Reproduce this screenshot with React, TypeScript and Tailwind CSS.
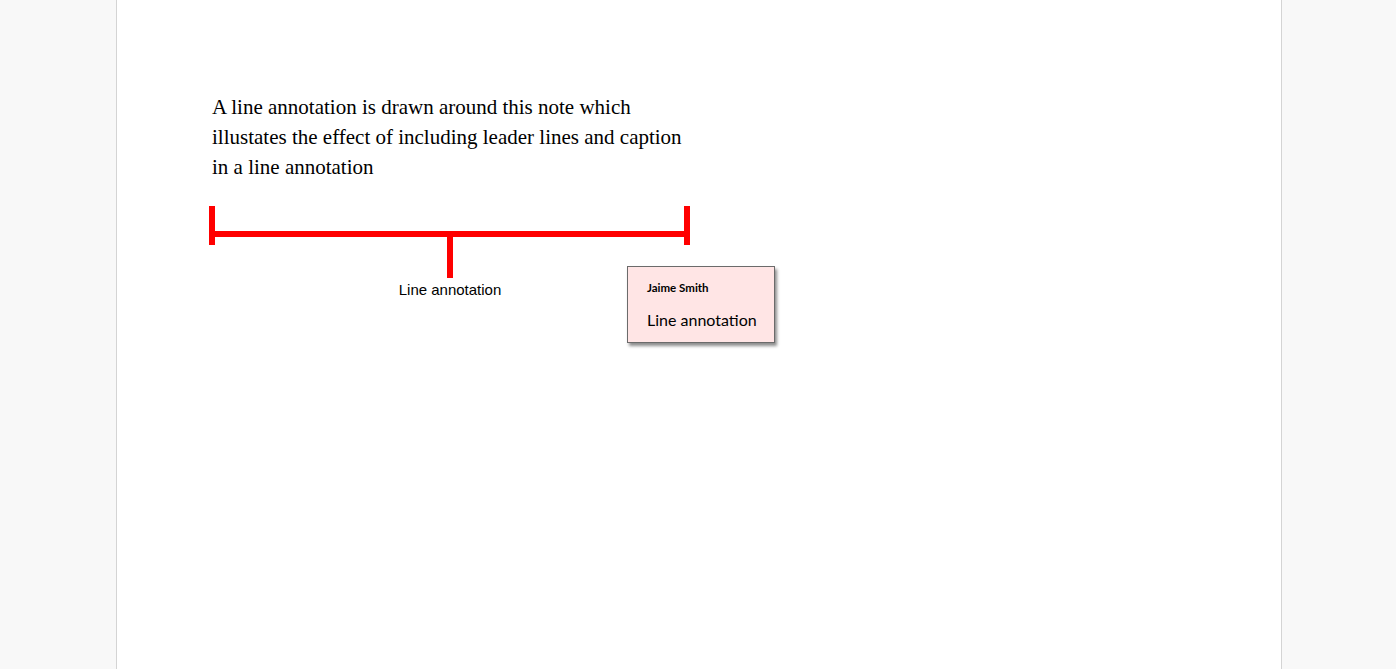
import React from "react"

const LineAnnotation: React.FC<{ caption: string }> = ({ caption }) => {
    return (
        <div className="flex flex-col items-center w-[482px] -ml-[3px] mt-[24px]">
            <svg width="482" height="72" viewBox="0 0 482 72">
                <rect x="0" y="0" width="6" height="39" fill="#ff0000" />
                <rect x="475" y="0" width="6" height="39" fill="#ff0000" />
                <rect x="0" y="25" width="481" height="6" fill="#ff0000" />
                <rect x="238" y="28" width="6" height="44" fill="#ff0000" />
            </svg>
            <div className="mt-[3px] font-['Liberation_Sans',sans-serif] text-[15px] leading-[18px] text-black">
                {caption}
            </div>
        </div>
    )
}

const NotePopup: React.FC<{ author: string, text: string }> = ({ author, text }) => {
    return (
        <div className="absolute left-[510px] top-[266px] w-[148px] h-[77px] bg-[#ffe5e5] border border-[#6b6b6b] shadow-[2px_3px_3px_rgba(0,0,0,0.45)] pl-[19px] pt-[14px] flex flex-col gap-[15px] font-['Lato',sans-serif] text-black">
            <div className="text-[11.5px] font-bold leading-[14px]">{author}</div>
            <div className="text-[16px] leading-[20px]">{text}</div>
        </div>
    )
}

export default function App() {
    const lines = [
        "A line annotation is drawn around this note which",
        "illustates the effect of including leader lines and caption",
        "in a line annotation",
    ]
    return (
        <div className="w-full h-[669px] bg-[#f8f8f8] overflow-hidden">
            <div className="relative ml-[116px] w-[1166px] h-full bg-white border-x border-[#d4d4d4]">
                <div className="flex flex-col pt-[92px] pl-[95px]">
                    <div className="font-['Liberation_Serif',serif] text-[21px] leading-[30px] text-black whitespace-nowrap">
                        {lines.map((line, index) => <div key={index}>{line}</div>)}
                    </div>
                    <LineAnnotation caption="Line annotation" />
                </div>
                <NotePopup author="Jaime Smith" text="Line annotation" />
            </div>
        </div>
    )
}
